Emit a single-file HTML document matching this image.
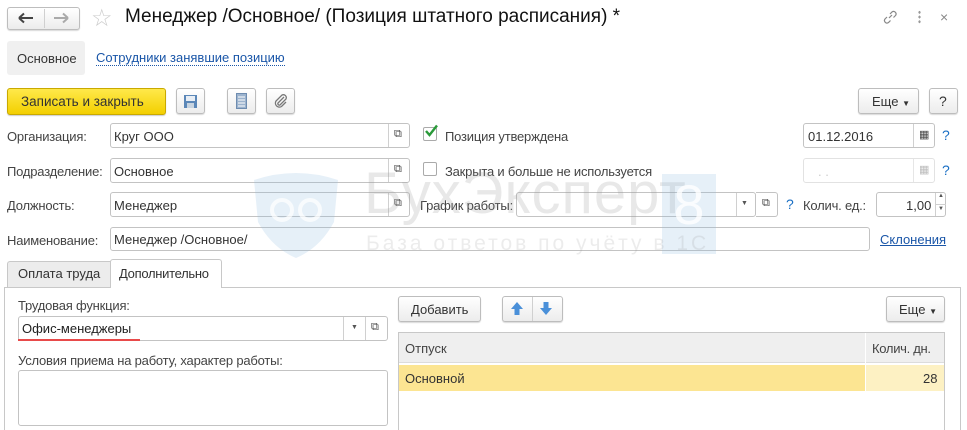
<!DOCTYPE html>
<html><head><meta charset="utf-8"><style>
*{box-sizing:border-box;margin:0;padding:0}
body{width:967px;height:430px;overflow:hidden;background:#fff;font-family:"Liberation Sans",Arial,sans-serif;font-size:13px;color:#333;position:relative}
.a{position:absolute}
.btn{position:absolute;border:1px solid #bdbdbd;border-radius:3px;background:linear-gradient(#fff,#ececec);box-shadow:0 1px 1px rgba(0,0,0,.15)}
.inp{position:absolute;border:1px solid #c3c3c3;border-radius:3px;background:#fff;height:25px}
.lbl{position:absolute;color:#444;font-size:13px;letter-spacing:-.2px}
.q{position:absolute;color:#1a6fc4;font-size:14px}
.pic{position:absolute;font-size:11px;color:#444}
.wm{position:absolute;z-index:10;pointer-events:none}
</style></head><body>

<!-- watermark (overlay) -->
<svg class="wm" style="left:250px;top:172px" width="92" height="88" viewBox="0 0 92 88"><path d="M4 8 Q46 -6 88 8 L84 50 Q70 76 46 86 Q22 76 8 50 Z" fill="rgba(140,185,225,.22)"/><circle cx="32" cy="38" r="10" fill="none" stroke="rgba(255,255,255,.7)" stroke-width="4"/><circle cx="60" cy="38" r="10" fill="none" stroke="rgba(255,255,255,.7)" stroke-width="4"/></svg>
<div class="wm" style="left:364px;top:160px;font-size:58px;color:rgba(150,150,150,.22);letter-spacing:1px">БухЭксперт</div>
<div class="wm" style="left:662px;top:174px;width:54px;height:80px;background:rgba(140,185,225,.22);color:rgba(255,255,255,.8);font-size:56px;text-align:center;line-height:62px">8</div>
<div class="wm" style="left:366px;top:232px;font-size:21px;color:rgba(150,150,150,.18);letter-spacing:3px">База ответов по учёту в 1С</div>

<!-- header -->
<div class="btn" style="left:7px;top:7px;width:73px;height:23px"></div>
<div class="a" style="left:44px;top:9px;width:1px;height:19px;background:#d0d0d0"></div>
<svg class="a" style="left:18px;top:12px" width="16" height="12"><path d="M1 6H15M1 6L6 1.5M1 6L6 10.5" stroke="#444" stroke-width="2" fill="none"/></svg>
<svg class="a" style="left:53px;top:12px" width="16" height="12"><path d="M1 6H15M15 6L10 1.5M15 6L10 10.5" stroke="#aaa" stroke-width="2" fill="none"/></svg>
<div class="a" style="left:91px;top:4px;font-size:24px;color:#ccc">☆</div>
<div class="a" style="left:125px;top:6px;font-size:19px;color:#111">Менеджер /Основное/ (Позиция штатного расписания) *</div>
<svg class="a" style="left:882px;top:9px" width="16" height="16" viewBox="0 0 16 16"><path d="M7 9 L10 6 M5 8 L3 10 A2.5 2.5 0 0 0 6.5 13.5 L8.5 11.5 M8 5 L10 3 A2.5 2.5 0 0 1 13.5 6.5 L11.5 8.5" stroke="#888" stroke-width="1.2" fill="none"/></svg>
<div class="a" style="left:918px;top:10px;width:3px;height:14px;background:radial-gradient(circle,#999 1.2px,transparent 1.3px) 0 0/3px 4.7px"></div>
<div class="a" style="left:940px;top:9px;font-size:14px;color:#888">×</div>

<div class="a" style="left:7px;top:41px;width:78px;height:34px;background:#f0f0f0;border-radius:3px"></div>
<div class="a" style="left:17px;top:51px;color:#333">Основное</div>
<div class="a" style="left:96px;top:51px;color:#1a56a8;border-bottom:1px dotted #1a56a8;line-height:14px">Сотрудники занявшие позицию</div>

<!-- toolbar -->
<div class="a" style="left:7px;top:88px;width:159px;height:27px;border:1px solid #c9a900;border-radius:3px;background:linear-gradient(#ffe94a,#f3cf00);box-shadow:0 1px 1px rgba(0,0,0,.2)"></div>
<div class="a" style="left:21px;top:94px;color:#333;font-size:13.5px">Записать и закрыть</div>
<div class="btn" style="left:176px;top:88px;width:29px;height:26px"></div>
<svg class="a" style="left:183px;top:94px" width="15" height="15"><rect x="1" y="1" width="13" height="13" fill="#5b87b8"/><rect x="3" y="2" width="9" height="5" fill="#e8eef5"/><rect x="4" y="9" width="7" height="5" fill="#c8d4e0"/></svg>
<div class="btn" style="left:227px;top:88px;width:29px;height:26px"></div>
<svg class="a" style="left:236px;top:93px" width="11" height="16"><rect x="0.5" y="0.5" width="10" height="15" fill="#9cb3ce" stroke="#6e8cb0"/><path d="M2 4h7M2 7h7M2 10h7M2 13h7" stroke="#fff"/></svg>
<div class="btn" style="left:266px;top:88px;width:29px;height:26px"></div>
<svg class="a" style="left:273px;top:93px" width="16" height="16" viewBox="0 0 16 16"><path d="M11 4 L5 10 A1.5 1.5 0 0 0 7 12 L13 6 A3 3 0 0 0 9 2 L3 8 A4 4 0 0 0 8.5 13.5 L13 9" stroke="#777" stroke-width="1.3" fill="none"/></svg>
<div class="btn" style="left:858px;top:88px;width:61px;height:26px"></div>
<div class="a" style="left:872px;top:94px;color:#333">Еще <span style="font-size:8px">▼</span></div>
<div class="btn" style="left:929px;top:88px;width:29px;height:26px"></div>
<div class="a" style="left:939px;top:93px;font-size:14px;color:#333">?</div>

<!-- rows -->
<div class="lbl" style="left:7px;top:129px">Организация:</div>
<div class="inp" style="left:110px;top:123px;width:300px"></div>
<div class="a" style="left:388px;top:124px;width:1px;height:23px;background:#d0d0d0"></div>
<div class="a" style="left:114px;top:129px;color:#333">Круг ООО</div>
<div class="pic" style="left:394px;top:128px">⧉</div>

<div class="a" style="left:423px;top:127px;width:14px;height:14px;border:1px solid #aaa;border-radius:2px;background:#fff"></div>
<svg class="a" style="left:424px;top:124px" width="14" height="14"><path d="M2 7 L5.5 11 L13 1.5" stroke="#2a9a3a" stroke-width="2.4" fill="none"/></svg>
<div class="lbl" style="left:445px;top:129px">Позиция утверждена</div>
<div class="inp" style="left:803px;top:123px;width:132px"></div>
<div class="a" style="left:913px;top:124px;width:1px;height:23px;background:#d0d0d0"></div>
<div class="a" style="left:808px;top:129px;color:#333">01.12.2016</div>
<div class="pic" style="left:919px;top:128px">▦</div>
<div class="q" style="left:942px;top:127px">?</div>

<div class="lbl" style="left:7px;top:164px">Подразделение:</div>
<div class="inp" style="left:110px;top:158px;width:300px"></div>
<div class="a" style="left:388px;top:159px;width:1px;height:23px;background:#d0d0d0"></div>
<div class="a" style="left:114px;top:164px;color:#333">Основное</div>
<div class="pic" style="left:394px;top:163px">⧉</div>
<div class="a" style="left:423px;top:162px;width:14px;height:14px;border:1px solid #aaa;border-radius:2px"></div>
<div class="lbl" style="left:445px;top:164px">Закрыта и больше не используется</div>
<div class="inp" style="left:803px;top:158px;width:132px;border-color:#e2e2e2"></div>
<div class="a" style="left:913px;top:159px;width:1px;height:23px;background:#e6e6e6"></div>
<div class="a" style="left:818px;top:164px;color:#ccc">. .</div>
<div class="pic" style="left:919px;top:163px;color:#bbb">▦</div>
<div class="q" style="left:942px;top:162px">?</div>

<div class="lbl" style="left:7px;top:198px">Должность:</div>
<div class="inp" style="left:110px;top:192px;width:300px"></div>
<div class="a" style="left:388px;top:193px;width:1px;height:23px;background:#d0d0d0"></div>
<div class="a" style="left:114px;top:198px;color:#333">Менеджер</div>
<div class="pic" style="left:394px;top:197px">⧉</div>
<div class="lbl" style="left:420px;top:198px">График работы:</div>
<div class="inp" style="left:516px;top:192px;width:240px"></div>
<div class="a" style="left:736px;top:193px;width:1px;height:23px;background:#d0d0d0"></div>
<div class="a" style="left:741px;top:200px;font-size:7px;color:#555">▼</div>
<div class="a" style="left:756px;top:192px;width:22px;height:25px;border:1px solid #c3c3c3;border-left:none;border-radius:0 3px 3px 0"></div>
<div class="pic" style="left:762px;top:197px">⧉</div>
<div class="q" style="left:786px;top:196px">?</div>
<div class="lbl" style="left:803px;top:198px">Колич. ед.:</div>
<div class="inp" style="left:876px;top:192px;width:70px"></div>
<div class="a" style="left:935px;top:193px;width:1px;height:23px;background:#d0d0d0"></div>
<div class="a" style="left:936px;top:204px;width:10px;height:1px;background:#d0d0d0"></div>
<div class="a" style="left:906px;top:198px;color:#333">1,00</div>
<div class="a" style="left:938px;top:193px;font-size:6px;color:#555">▲</div>
<div class="a" style="left:938px;top:206px;font-size:6px;color:#555">▼</div>

<div class="lbl" style="left:7px;top:233px">Наименование:</div>
<div class="inp" style="left:110px;top:227px;width:760px;height:24px"></div>
<div class="a" style="left:114px;top:232px;color:#333">Менеджер /Основное/</div>
<div class="a" style="left:880px;top:232px;color:#1a56a8;text-decoration:underline">Склонения</div>

<!-- tabs -->
<div class="a" style="left:4px;top:287px;width:957px;height:143px;border:1px solid #c8c8c8;border-bottom:none"></div>
<div class="a" style="left:7px;top:261px;width:104px;height:27px;background:#ececec;border:1px solid #c8c8c8;border-right:none;border-radius:3px 0 0 0"></div>
<div class="a" style="left:18px;top:266px;color:#333">Оплата труда</div>
<div class="a" style="left:110px;top:259px;width:112px;height:29px;background:#fff;border:1px solid #c8c8c8;border-bottom:none;border-radius:3px 3px 0 0"></div>
<div class="a" style="left:119px;top:266px;color:#333;white-space:nowrap;letter-spacing:-.3px">Дополнительно</div>

<div class="lbl" style="left:18px;top:298px">Трудовая функция:</div>
<div class="inp" style="left:18px;top:316px;width:370px"></div>
<div class="a" style="left:22px;top:321px;color:#222">Офис-менеджеры</div>
<div class="a" style="left:18px;top:339px;width:122px;height:2px;background:#e84a4a"></div>
<div class="a" style="left:343px;top:317px;width:1px;height:23px;background:#d0d0d0"></div>
<div class="a" style="left:365px;top:317px;width:1px;height:23px;background:#d0d0d0"></div>
<div class="a" style="left:351px;top:324px;font-size:7px;color:#555">▼</div>
<div class="pic" style="left:371px;top:321px">⧉</div>

<div class="lbl" style="left:18px;top:353px">Условия приема на работу, характер работы:</div>
<div class="a" style="left:18px;top:370px;width:370px;height:56px;border:1px solid #c3c3c3;border-radius:3px"></div>

<div class="btn" style="left:398px;top:296px;width:83px;height:26px"></div>
<div class="a" style="left:411px;top:302px;color:#333">Добавить</div>
<div class="btn" style="left:502px;top:296px;width:61px;height:26px"></div>
<div class="a" style="left:532px;top:297px;width:1px;height:24px;background:#d0d0d0"></div>
<svg class="a" style="left:510px;top:301px" width="14" height="15"><path d="M7 1 L13 8 H9.5 V14 H4.5 V8 H1 Z" fill="#4a90d9"/></svg>
<svg class="a" style="left:539px;top:301px" width="14" height="15"><path d="M7 14 L13 7 H9.5 V1 H4.5 V7 H1 Z" fill="#4a90d9"/></svg>
<div class="btn" style="left:886px;top:296px;width:59px;height:26px"></div>
<div class="a" style="left:899px;top:302px;color:#333">Еще <span style="font-size:8px">▼</span></div>

<div class="a" style="left:398px;top:332px;width:547px;height:98px;border:1px solid #c8c8c8;border-bottom:none"></div>
<div class="a" style="left:399px;top:333px;width:545px;height:30px;background:#efefef;border-bottom:1px solid #dcdcdc"></div>
<div class="a" style="left:865px;top:333px;width:1px;height:58px;background:#fff"></div>
<div class="a" style="left:405px;top:341px;color:#444">Отпуск</div>
<div class="a" style="left:872px;top:341px;color:#444;letter-spacing:-.3px">Колич. дн.</div>
<div class="a" style="left:399px;top:365px;width:466px;height:26px;background:#fce592"></div>
<div class="a" style="left:866px;top:365px;width:78px;height:26px;background:#fdf1c3"></div>
<div class="a" style="left:405px;top:371px;color:#333">Основной</div>
<div class="a" style="left:923px;top:371px;color:#333">28</div>
</body></html>
